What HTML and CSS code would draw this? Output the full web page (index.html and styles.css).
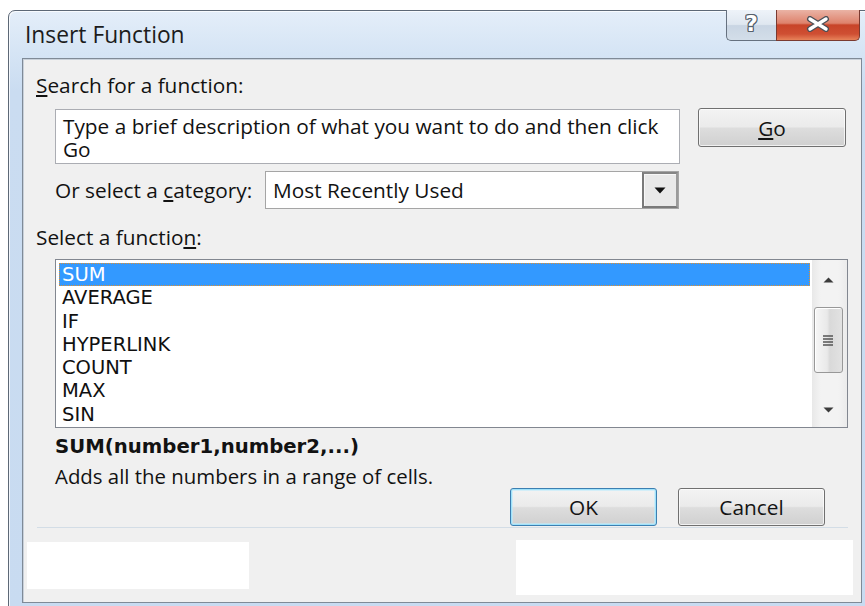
FILE: index.html
```html
<!DOCTYPE html>
<html lang="en">
<head>
<meta charset="utf-8">
<title>Insert Function</title>
<link rel="stylesheet" href="styles.css">
</head>
<body>
<div class="window">
  <div class="titlebar">
    <span class="title">Insert Function</span>
    <div class="caption-buttons">
      <div class="cap-btn help"><span class="help-glyph">?</span></div>
      <div class="cap-btn close">
        <svg class="close-glyph" width="24" height="16" viewBox="0 0 24 16">
          <path d="M4 3 L20 13 M20 3 L4 13" stroke="#4a4f57" stroke-width="6" stroke-linecap="round"/>
          <path d="M4 3 L20 13 M20 3 L4 13" stroke="#ffffff" stroke-width="3.4" stroke-linecap="round"/>
        </svg>
      </div>
    </div>
  </div>

  <div class="client">
    <div class="label l-search"><u>S</u>earch for a function:</div>

    <div class="search-row">
      <div class="textbox">
        <div class="tb-line">Type a brief description of what you want to do and then click</div>
        <div class="tb-line">Go</div>
      </div>
      <div class="button go"><span><u>G</u>o</span></div>
    </div>

    <div class="category-row">
      <div class="cat-label">Or select a <u>c</u>ategory:</div>
      <div class="combo">
        <span class="combo-text">Most Recently Used</span>
        <div class="combo-btn">
          <svg width="12" height="7" viewBox="0 0 12 7"><polygon points="0.5,0.5 11.5,0.5 6,6.5" fill="#111"/></svg>
        </div>
      </div>
    </div>

    <div class="label l-func">Select a functio<u>n</u>:</div>

    <div class="listbox">
      <ul class="items">
        <li class="selected">SUM</li>
        <li>AVERAGE</li>
        <li>IF</li>
        <li>HYPERLINK</li>
        <li>COUNT</li>
        <li>MAX</li>
        <li>SIN</li>
      </ul>
      <div class="scrollbar">
        <div class="sb-arrow up">
          <svg width="11" height="6" viewBox="0 0 11 6"><polygon points="5.5,0.5 10.5,5.5 0.5,5.5" fill="#3c3c3c"/></svg>
        </div>
        <div class="sb-thumb">
          <svg width="14" height="14" viewBox="0 0 14 14">
            <path d="M2 3 H12 M2 6 H12 M2 9 H12 M2 12 H12" stroke="#555555" stroke-width="1.4"/>
          </svg>
        </div>
        <div class="sb-space"></div>
        <div class="sb-arrow down">
          <svg width="11" height="6" viewBox="0 0 11 6"><polygon points="0.5,0.5 10.5,0.5 5.5,5.5" fill="#3c3c3c"/></svg>
        </div>
      </div>
    </div>

    <div class="signature">SUM(number1,number2,...)</div>
    <div class="description">Adds all the numbers in a range of cells.</div>

    <div class="actions">
      <div class="button ok"><span>OK</span></div>
      <div class="button cancel"><span>Cancel</span></div>
    </div>

    <div class="separator"></div>

    <div class="footer">
      <div class="blank b-left"></div>
      <div class="blank b-right"></div>
    </div>
  </div>
</div>
</body>
</html>
```

FILE: styles.css
```css
* {
  box-sizing: border-box;
}

html,
body {
  margin: 0;
}

body {
  width: 865px;
  height: 606px;
  overflow: hidden;
  background: #ffffff;
  padding: 10px 0 0 8px;
  font-family: "Open Sans", "Noto Sans", sans-serif;
  color: #121212;
}

/* Aero-style window frame */
.window {
  width: 868px;
  height: 620px;
  padding: 0 13px;
  border: 1px solid #5d6876;
  border-radius: 7px 7px 0 0;
  background: linear-gradient(#e4eef9, #d6e5f5 40px, #cadcf1 80px, #c8dbf1);
  box-shadow: inset 1px 1px 0 rgba(255, 255, 255, 0.75);
}

.titlebar {
  height: 47px;
  display: flex;
  justify-content: space-between;
  align-items: flex-start;
}

.title {
  margin: 11px 0 0 3px;
  font-size: 22.8px;
  line-height: 26px;
  color: #1c1c1c;
}

.caption-buttons {
  display: flex;
  margin: -1px 2px 0 0;
}

.cap-btn {
  height: 31px;
  display: flex;
  align-items: center;
  justify-content: center;
  border: 1px solid #66717f;
  border-top: none;
}

.help {
  width: 50px;
  border-right: none;
  border-radius: 0 0 0 5px;
  background: linear-gradient(#eef3f9, #dfe7f0 48%, #c9d5e3 52%, #d3dee9);
}

.help-glyph {
  margin-top: -3px;
  font-family: "DejaVu Sans", sans-serif;
  font-weight: bold;
  font-size: 22px;
  line-height: 24px;
  color: #ffffff;
  text-shadow:
    1px 0 0 #56606c, -1px 0 0 #56606c, 0 1px 0 #56606c, 0 -1px 0 #56606c,
    1px 1px 0 #56606c, -1px -1px 0 #56606c, 1px -1px 0 #56606c, -1px 1px 0 #56606c;
}

.close {
  width: 84px;
  border-color: #7a3a30;
  border-radius: 0 0 5px 0;
  background: linear-gradient(#eab3a5, #de826c 44%, #c84429 50%, #cf4f33 80%, #e7835a);
}

.close-glyph {
  margin-top: -3px;
}

/* Dialog client area */
.client {
  height: 545px;
  background: #f0f0f0;
  border: 1px solid #7f8a97;
  box-shadow: inset 1px 1px 0 #c9d1da;
}

.label {
  padding-left: 13px;
  font-size: 20.8px;
  line-height: 26px;
}

.l-search {
  margin-top: 13px;
}

.search-row {
  display: flex;
  align-items: flex-start;
  margin-top: 10px;
  padding-left: 32px;
}

.textbox {
  width: 625px;
  height: 55px;
  margin-top: 1px;
  padding: 4px 7px 0;
  background: #ffffff;
  border: 1px solid #abadb3;
  font-size: 20.8px;
  white-space: nowrap;
}

.tb-line {
  height: 23px;
  line-height: 24px;
}

.button {
  display: flex;
  align-items: center;
  justify-content: center;
  border: 1px solid #707070;
  border-radius: 3px;
  background: linear-gradient(#f3f3f3, #ebebeb 48%, #dddddd 52%, #d0d0d0);
  box-shadow: inset 0 0 0 1px rgba(255, 255, 255, 0.7);
  font-size: 20.8px;
  color: #141414;
}

.go {
  width: 148px;
  height: 39px;
  margin-left: 18px;
}

.category-row {
  display: flex;
  align-items: center;
  margin-top: 7px;
  padding-left: 32px;
}

.cat-label {
  width: 210px;
  font-size: 20.8px;
}

.combo {
  width: 414px;
  height: 38px;
  display: flex;
  background: #ffffff;
  border: 1px solid #a5a5a5;
}

.combo-text {
  flex: 1;
  padding-left: 7px;
  font-size: 20.8px;
  line-height: 36px;
}

.combo-btn {
  width: 36px;
  display: flex;
  align-items: center;
  justify-content: center;
  border: 2px solid;
  border-color: #858585 #9a9a9a #7a7a7a #7a7a7a;
  background: #e9e9e9;
  box-shadow: inset 1px 1px 0 #f7f7f7;
}

.l-func {
  margin-top: 15px;
}

/* Function list */
.listbox {
  width: 793px;
  height: 169px;
  margin: 9px 0 0 32px;
  display: flex;
  background: #ffffff;
  border: 1px solid #828790;
}

.items {
  flex: 1;
  margin: 0;
  padding: 3px 2px 0 3px;
  list-style: none;
  font-family: "DejaVu Sans", sans-serif;
  font-size: 19.5px;
  color: #101010;
}

.items li {
  height: 23.25px;
  line-height: 21.25px;
  padding-left: 2px;
  border: 1px dotted transparent;
}

.items li.selected {
  background: #3399ff;
  color: #ffffff;
  border-color: #e0902f;
}

.scrollbar {
  width: 35px;
  display: flex;
  flex-direction: column;
  align-items: center;
  padding-right: 3px;
  background: linear-gradient(90deg, #e8e8e8, #f3f3f3 25%, #f3f3f3 75%, #ebebeb);
}

.sb-arrow {
  display: flex;
  align-items: center;
  justify-content: center;
}

.sb-arrow.up {
  height: 40px;
}

.sb-arrow.down {
  height: 34px;
}

.sb-thumb {
  width: 29px;
  height: 66px;
  margin-top: 7px;
  display: flex;
  align-items: center;
  justify-content: center;
  border: 1px solid #989898;
  border-radius: 3px;
  background: linear-gradient(90deg, #f6f6f6, #e9e9e9 45%, #d9d9d9 55%, #e2e2e2);
  box-shadow: inset 1px 1px 0 #ffffff;
}

.sb-space {
  flex: 1;
}

.signature {
  margin: 7px 0 0 32px;
  font-family: "DejaVu Sans", sans-serif;
  font-weight: bold;
  font-size: 19.7px;
  line-height: 24px;
}

.description {
  margin: 5px 0 0 32px;
  font-size: 20.4px;
  line-height: 24px;
}

.actions {
  display: flex;
  justify-content: flex-end;
  gap: 21px;
  padding-right: 36px;
}

.actions .button {
  width: 147px;
  height: 38px;
}

.ok {
  border-color: #3c7fb1;
  box-shadow: inset 0 0 0 1px #9fe2fb, inset 0 0 0 2px rgba(190, 235, 252, 0.6);
}

.separator {
  height: 1px;
  margin: 1px 13px 0 14px;
  background: #d3dde6;
}

.footer {
  display: flex;
  align-items: flex-start;
}

.blank {
  background: #ffffff;
}

.b-left {
  width: 222px;
  height: 47px;
  margin: 14px 0 0 4px;
}

.b-right {
  width: 337px;
  height: 55px;
  margin: 12px 8px 0 auto;
}
```
